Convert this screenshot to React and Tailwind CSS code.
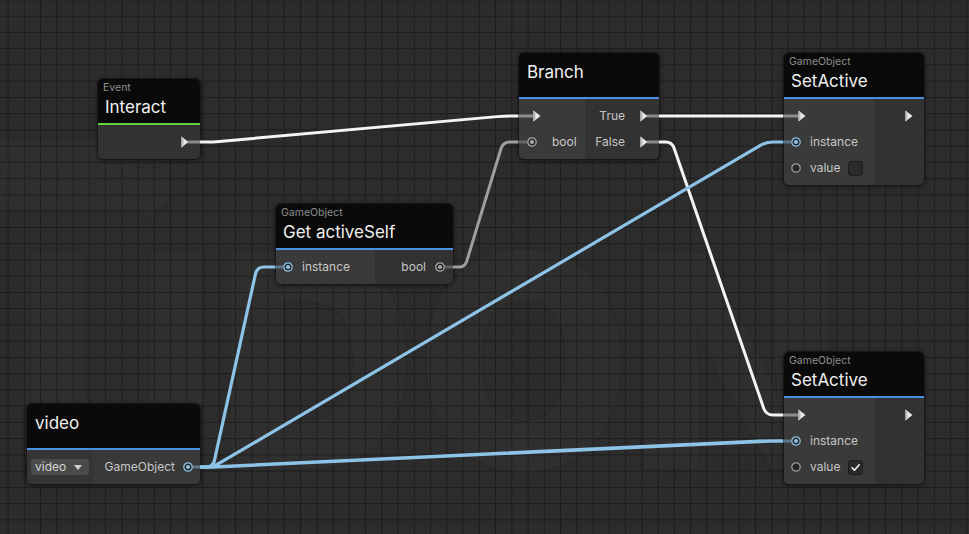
import React from "react";

function rounded(points, r) {
  let d = `M ${points[0][0]} ${points[0][1]}`;
  for (let i = 1; i < points.length - 1; i++) {
    const [x0, y0] = points[i - 1];
    const [x1, y1] = points[i];
    const [x2, y2] = points[i + 1];
    const d1 = Math.hypot(x1 - x0, y1 - y0);
    const d2 = Math.hypot(x2 - x1, y2 - y1);
    const rr = Math.min(r, d1 / 2, d2 / 2);
    const ax = x1 - ((x1 - x0) / d1) * rr;
    const ay = y1 - ((y1 - y0) / d1) * rr;
    const bx = x1 + ((x2 - x1) / d2) * rr;
    const by = y1 + ((y2 - y1) / d2) * rr;
    d += ` L ${ax} ${ay} Q ${x1} ${y1} ${bx} ${by}`;
  }
  const last = points[points.length - 1];
  d += ` L ${last[0]} ${last[1]}`;
  return d;
}

const WHITE = "#f4f4f4";
const BLUE = "#8cc3e6";
const GRAY = "#9e9e9e";

const edges = [
  { pts: [[200, 142], [213, 142], [504, 116], [518, 116]], c: WHITE, w: 3 },
  { pts: [[659, 116], [783, 116]], c: WHITE, w: 3 },
  { pts: [[659, 142], [672, 142], [766, 415], [783, 415]], c: WHITE, w: 3 },
  { pts: [[453, 267], [465, 267], [503, 142], [518, 142]], c: GRAY, w: 3 },
  { pts: [[200, 467], [213, 467], [257, 267], [275, 267]], c: BLUE, w: 3.2 },
  { pts: [[200, 467], [213, 467], [766, 142], [783, 142]], c: BLUE, w: 3.2 },
  { pts: [[200, 467], [213, 467], [766, 441], [783, 441]], c: BLUE, w: 3.6 },
];

const stubs = [
  [188, 200, 142, WHITE],
  [518, 533, 116, WHITE],
  [647, 659, 116, WHITE],
  [783, 798, 116, WHITE],
  [647, 659, 142, WHITE],
  [783, 798, 415, WHITE],
  [444, 453, 267, GRAY],
  [518, 527, 142, GRAY],
  [192, 200, 467, BLUE],
  [275, 283, 267, BLUE],
  [783, 791, 142, BLUE],
  [783, 791, 441, BLUE],
];

function FlowArrow() {
  return (
    <svg width="8" height="12" viewBox="0 0 8 12" className="shrink-0 block">
      <polygon points="0.5,0.5 7.5,6 0.5,11.5" fill="#e8e8e8" />
      <polygon points="0.5,0.5 2.5,2.2 2.5,9.8 0.5,11.5" fill="#bdbdbd" />
    </svg>
  );
}

function Port({ color = "#a8a8a8", filled = true }) {
  return (
    <svg width="10" height="10" viewBox="0 0 10 10" className="shrink-0 block">
      <circle cx="5" cy="5" r="4.2" fill="#262626" stroke={color} strokeWidth="1.3" />
      {filled && <circle cx="5" cy="5" r="2.1" fill={color} />}
    </svg>
  );
}

function Node({ className, sub, title, accent = "bg-[#4b8fe2]", leftW, leftBg = "bg-[#3a3a3a]", rightBg = "bg-[#323232]", left, right }) {
  return (
    <div className={`absolute flex flex-col rounded-[6px] border border-[#171717] overflow-hidden shadow-[0_1px_4px_rgba(0,0,0,0.45)] ${className}`}>
      <div className="h-[44px] bg-[#0a0a0a] flex flex-col">
        {sub ? (
          <>
            <div className="pt-[3px] pl-[5px] text-[10.5px] leading-[12px] text-[#8e8e8e]">{sub}</div>
            <div className="mt-[2px] pl-[7px] text-[17px] leading-[22px] text-[#f0f0f0]">{title}</div>
          </>
        ) : (
          <div className="pt-[8px] pl-[8px] text-[17px] leading-[22px] text-[#f0f0f0]">{title}</div>
        )}
      </div>
      <div className={`h-[2px] ${accent}`} />
      <div className="flex flex-1">
        {left !== undefined && (
          <div className={`${leftW} ${leftBg} flex flex-col py-[4px]`}>{left}</div>
        )}
        <div className={`flex-1 ${rightBg} flex flex-col py-[4px]`}>{right}</div>
      </div>
    </div>
  );
}

const Row = ({ children, className = "" }) => (
  <div className={`h-[26px] flex items-center text-[12px] text-[#c6c6c6] ${className}`}>{children}</div>
);

function Checkbox({ checked }) {
  return (
    <div className="w-[15px] h-[15px] rounded-[3px] bg-[#2a2a2a] border border-[#1c1c1c] flex items-center justify-center">
      {checked && (
        <svg width="11" height="11" viewBox="0 0 11 11">
          <path d="M2 5.8 L4.4 8.2 L9.2 2.8" fill="none" stroke="#f2f2f2" strokeWidth="1.6" strokeLinecap="round" strokeLinejoin="round" />
        </svg>
      )}
    </div>
  );
}

export default function App() {
  return (
    <div className="relative w-[969px] h-[534px] overflow-hidden bg-[#2c2c2c] bg-[linear-gradient(to_right,#1c1c1c_1.4px,transparent_1.4px),linear-gradient(to_bottom,#1c1c1c_1.4px,transparent_1.4px)] bg-size-[16.25px_16.25px] bg-position-[7.6px_-0.6px] font-[Inter,'Noto_Sans',sans-serif]">
      {/* watermark */}
      <svg className="absolute inset-0 pointer-events-none" width="969" height="534">
        <g fill="rgba(255,255,255,0.016)" stroke="rgba(0,0,0,0.07)" strokeWidth="1.5" fontFamily="Inter, sans-serif" fontWeight="900">
          <path d="M -30 140 H 155 Q 170 140 170 155 V 195 Q 170 210 155 210 L 158 222 L 140 210 H -30 Z" />
          <text x="-18" y="200" fontSize="58" textLength="180" lengthAdjust="spacingAndGlyphs">VR CHAT</text>
          <text x="18" y="470" fontSize="300" textLength="825" lengthAdjust="spacingAndGlyphs">UDON</text>
          <text x="660" y="490" fontSize="44" textLength="125" lengthAdjust="spacingAndGlyphs">ALPHA</text>
        </g>
      </svg>

      {/* Event Interact */}
      <Node
        className="left-[97px] top-[78px] w-[104px]"
        sub="Event"
        title="Interact"
        accent="bg-[#62d43e]"
        rightBg="bg-[#323232]"
        right={
          <Row className="justify-end pr-[11px]">
            <FlowArrow />
          </Row>
        }
      />

      {/* Branch */}
      <Node
        className="left-[518px] top-[52px] w-[142px]"
        title="Branch"
        leftW="w-[66px]"
        left={
          <>
            <Row className="pl-[14px]"><FlowArrow /></Row>
            <Row className="pl-[8px]">
              <Port color="#a9a9a9" />
              <span className="ml-[15px]">bool</span>
            </Row>
          </>
        }
        right={
          <>
            <Row className="justify-end pr-[11px]">
              <span>True</span>
              <span className="ml-[15px]"><FlowArrow /></span>
            </Row>
            <Row className="justify-end pr-[11px]">
              <span>False</span>
              <span className="ml-[15px]"><FlowArrow /></span>
            </Row>
          </>
        }
      />

      {/* Get activeSelf */}
      <Node
        className="left-[275px] top-[203px] w-[179px]"
        sub="GameObject"
        title="Get activeSelf"
        leftW="w-[99px]"
        left={
          <Row className="pl-[7px]">
            <Port color={BLUE} />
            <span className="ml-[9px]">instance</span>
          </Row>
        }
        right={
          <Row className="justify-end pr-[8px]">
            <span>bool</span>
            <span className="ml-[9px]"><Port color="#a9a9a9" /></span>
          </Row>
        }
      />

      {/* SetActive top */}
      <Node
        className="left-[783px] top-[52px] w-[142px]"
        sub="GameObject"
        title="SetActive"
        leftW="w-[91px]"
        left={
          <>
            <Row className="pl-[14px]"><FlowArrow /></Row>
            <Row className="pl-[7px]">
              <Port color={BLUE} />
              <span className="ml-[9px]">instance</span>
            </Row>
            <Row className="pl-[7px]">
              <Port color="#9a9a9a" filled={false} />
              <span className="ml-[9px]">value</span>
              <span className="ml-[8px]"><Checkbox /></span>
            </Row>
          </>
        }
        right={
          <Row className="justify-end pr-[11px]"><FlowArrow /></Row>
        }
      />

      {/* SetActive bottom */}
      <Node
        className="left-[783px] top-[351px] w-[142px]"
        sub="GameObject"
        title="SetActive"
        leftW="w-[91px]"
        left={
          <>
            <Row className="pl-[14px]"><FlowArrow /></Row>
            <Row className="pl-[7px]">
              <Port color={BLUE} />
              <span className="ml-[9px]">instance</span>
            </Row>
            <Row className="pl-[7px]">
              <Port color="#9a9a9a" filled={false} />
              <span className="ml-[9px]">value</span>
              <span className="ml-[8px]"><Checkbox checked /></span>
            </Row>
          </>
        }
        right={
          <Row className="justify-end pr-[11px]"><FlowArrow /></Row>
        }
      />

      {/* video variable */}
      <Node
        className="left-[26px] top-[403px] w-[175px]"
        title="video"
        leftW="w-[66px]"
        leftBg="bg-[#353535]"
        rightBg="bg-[#393939]"
        left={
          <Row className="pl-[4px]">
            <div className="w-[58px] h-[16px] rounded-[3px] bg-[#4a4a4a] flex items-center justify-between pl-[4px] pr-[7px] text-[12px] leading-[16px] text-[#d4d4d4]">
              <span>video</span>
              <svg width="8" height="5" viewBox="0 0 8 5"><polygon points="0,0 8,0 4,5" fill="#cfcfcf" /></svg>
            </div>
          </Row>
        }
        right={
          <Row className="justify-end pr-[7px]">
            <span>GameObject</span>
            <span className="ml-[8px]"><Port color={BLUE} /></span>
          </Row>
        }
      />

      {/* edges */}
      <svg className="absolute inset-0 pointer-events-none" width="969" height="534">
        {stubs.map(([x1, x2, y, c], i) => (
          <line key={"s" + i} x1={x1} y1={y} x2={x2} y2={y} stroke={c} strokeOpacity="0.45" strokeWidth="3" />
        ))}
        {edges.map((e, i) => (
          <path key={i} d={rounded(e.pts, 7)} fill="none" stroke={e.c} strokeWidth={e.w} strokeLinejoin="round" />
        ))}
      </svg>
    </div>
  );
}
